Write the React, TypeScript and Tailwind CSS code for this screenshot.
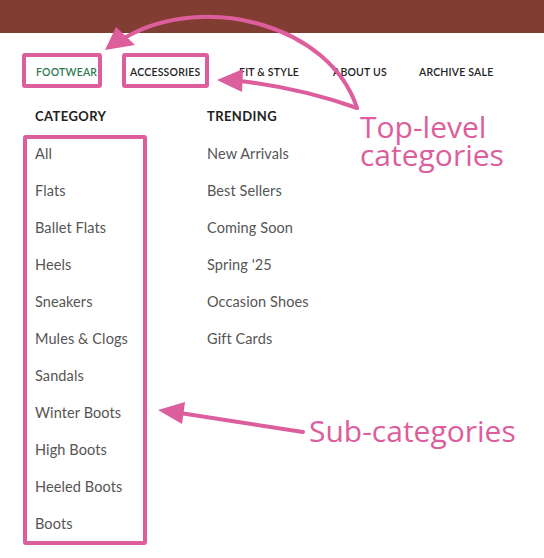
import React from "react";

const navItems = [
  { label: "FOOTWEAR", w: "w-[94px]", active: true },
  { label: "ACCESSORIES", w: "w-[109px]", active: false },
  { label: "FIT & STYLE", w: "w-[94px]", active: false },
  { label: "ABOUT US", w: "w-[86px]", active: false },
  { label: "ARCHIVE SALE", w: "w-auto", active: false },
];
const categories = [
  "All",
  "Flats",
  "Ballet Flats",
  "Heels",
  "Sneakers",
  "Mules & Clogs",
  "Sandals",
  "Winter Boots",
  "High Boots",
  "Heeled Boots",
  "Boots",
];
const trending = ["New Arrivals", "Best Sellers", "Coming Soon", "Spring '25", "Occasion Shoes", "Gift Cards"];

const PINK = "#DC5E9C";

function Column({ title, items }: { title: string; items: string[] }) {
  return (
    <div className="w-[172px] flex flex-col">
      <div className="h-[20px] leading-[20px] text-[13px] font-bold tracking-[0.4px] text-[#222]">{title}</div>
      <ul className="mt-[9px] flex flex-col">
        {items.map((it) => (
          <li key={it} className="h-[37px] leading-[37px] text-[14.5px] tracking-[0.1px] text-[#555]">
            {it}
          </li>
        ))}
      </ul>
    </div>
  );
}

export default function App() {
  return (
    <div className="relative w-[544px] h-[558px] bg-white overflow-hidden" style={{ fontFamily: "Lato, 'Open Sans', sans-serif" }}>
      <div className="h-[33px] bg-[#823D33]" />

      <nav className="flex pl-[36px] pt-[31px]">
        {navItems.map((n) => (
          <span
            key={n.label}
            className={`${n.w} shrink-0 h-[16px] leading-[16px] text-[10.5px] tracking-[0.2px] font-semibold ${n.active ? "text-[#2E7A55]" : "text-[#222]"}`}
          >
            {n.label}
          </span>
        ))}
      </nav>

      <div className="flex pl-[35px] pt-[26px]">
        <Column title="CATEGORY" items={categories} />
        <Column title="TRENDING" items={trending} />
      </div>

      {/* annotation overlay */}
      <div className="absolute left-[22px] top-[53px] w-[80px] h-[35px] border-[4px] border-[#DC5E9C] rounded-[3px]" />
      <div className="absolute left-[122px] top-[53px] w-[87px] h-[35px] border-[4px] border-[#DC5E9C] rounded-[3px]" />
      <div className="absolute left-[23px] top-[135px] w-[124px] h-[410px] border-[4px] border-[#DC5E9C] rounded-[3px]" />

      <svg className="absolute left-0 top-0" width="544" height="558" viewBox="0 0 544 558" fill="none">
        <path d="M357 108 C 330 25, 205 -8, 126 37" stroke={PINK} strokeWidth="4" strokeLinecap="round" fill="none" />
        <polygon points="105,50 116,27 135,45" fill={PINK} />
        <path d="M357 108 Q 300 88 240 81" stroke={PINK} strokeWidth="4" strokeLinecap="round" fill="none" />
        <polygon points="217,80 243,69 242,92" fill={PINK} />
        <path d="M303 432 L 180 413" stroke={PINK} strokeWidth="4" strokeLinecap="round" fill="none" />
        <polygon points="158,410 185,402 182,424" fill={PINK} />
      </svg>

      <div
        className="absolute left-[360px] top-[113px] text-[30px] leading-[28px] text-[#DC5E9C]"
        style={{ fontFamily: "'Open Sans', sans-serif" }}
      >
        Top-level
        <br />
        categories
      </div>
      <div
        className="absolute left-[309px] top-[417px] text-[30px] leading-[28px] text-[#DC5E9C]"
        style={{ fontFamily: "'Open Sans', sans-serif" }}
      >
        Sub-categories
      </div>
    </div>
  );
}
